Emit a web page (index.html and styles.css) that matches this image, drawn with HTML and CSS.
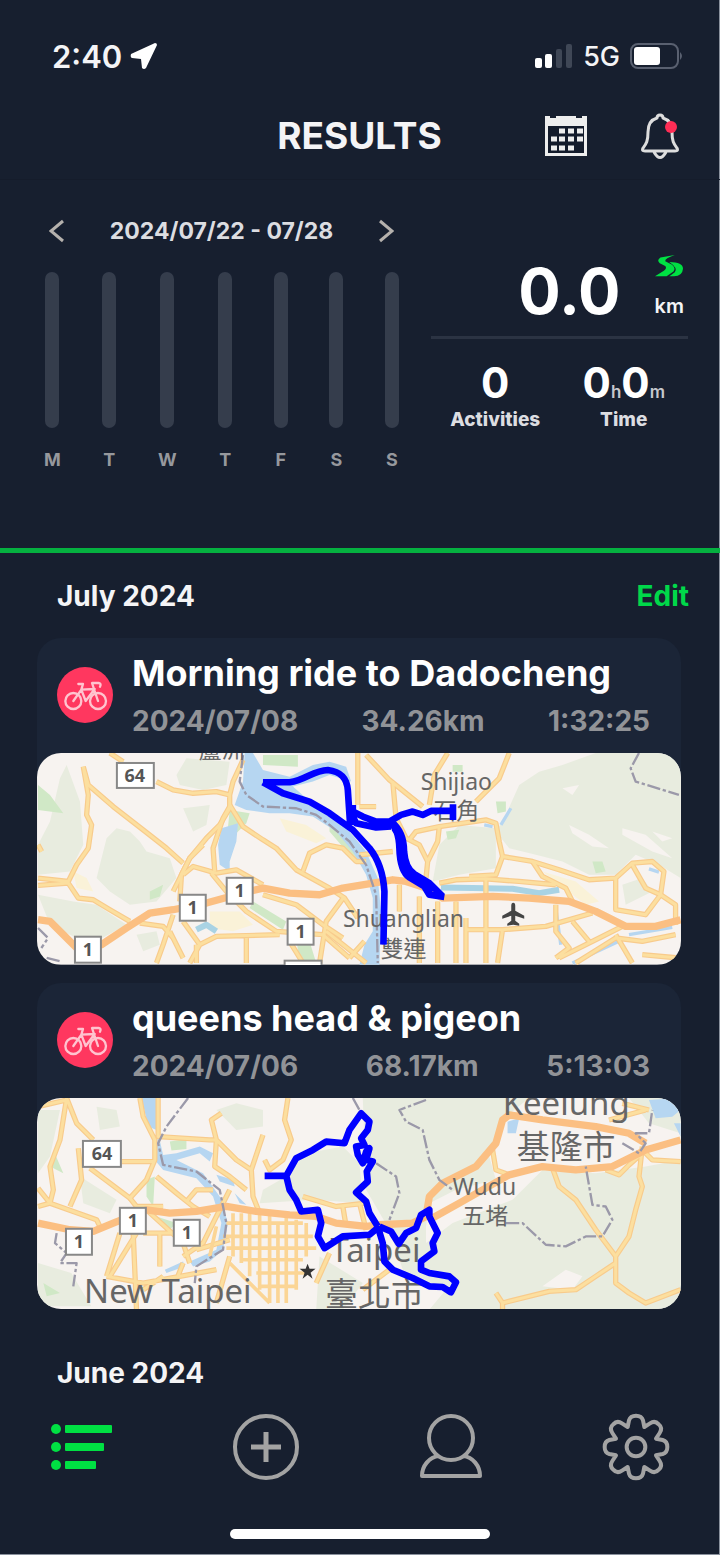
FILE: index.html
```
<!DOCTYPE html>
<html lang="en">
<head>
    <meta charset="UTF-8">
    <meta name="viewport" content="width=device-width, initial-scale=1.0">
    <title>Results</title>
    <link rel="stylesheet" href="styles.css">
</head>
<body>
    <div class="app">
        <div class="status-bar">
            <div class="status-left">
                <span class="clock">2:40</span>
                <svg width="28" height="28" viewBox="0 0 28 28" fill="#fff"><path d="M25 1L1 12q-1 3 1 4l9 1 1 9q2 2 4 0L27 3q0-2-2-2z"/></svg>
            </div>
            <div class="status-right">
                <svg width="38" height="26" viewBox="0 0 38 26">
                    <rect x="0" y="15" width="7" height="10" rx="2" fill="#fff"/>
                    <rect x="10" y="11" width="7" height="14" rx="2" fill="#fff"/>
                    <rect x="21" y="6" width="6" height="19" rx="2" fill="#3f4756"/>
                    <rect x="31" y="1" width="6" height="24" rx="2" fill="#3f4756"/>
                </svg>
                <span class="network">5G</span>
                <svg width="54" height="28" viewBox="0 0 54 28">
                    <rect x="1" y="2" width="47" height="24" rx="7" fill="none" stroke="#596070" stroke-width="2"/>
                    <rect x="4" y="5" width="26" height="18" rx="3" fill="#fff"/>
                    <path d="M50 10q4 4 0 8z" fill="#596070"/>
                </svg>
            </div>
        </div>

        <header class="header">
            <h1>RESULTS</h1>
            <div class="header-actions">
                <button class="icon-btn" aria-label="Calendar">
                    <svg width="44" height="44" viewBox="0 0 44 44">
                        <path d="M1 2h5v2h6V2h20v2h6V2h5v40H1z" fill="#eee"/>
                        <path d="M4 12h36v27H4z" fill="#131b2b"/>
                        <path d="M15 17h6M24 17h6M33 17h6M7 25h6M15 25h6M24 25h6M33 25h6M7 34h6M15 34h6M24 34h6" stroke="#eee" stroke-width="5"/>
                    </svg>
                </button>
                <button class="icon-btn" aria-label="Notifications">
                    <svg width="40" height="48" viewBox="0 0 40 48">
                        <path d="M20 3q3 0 3 3c7 2 9 8 9 14 0 10 2 12 5 16q2 3-2 3H5q-4 0-2-3c3-4 5-6 5-16 0-6 2-12 9-14q0-3 3-3zM14 40q6 11 12 0" fill="none" stroke="#ddd" stroke-width="3" stroke-linejoin="round"/>
                        <circle cx="31" cy="15" r="6" fill="#ff2d55"/>
                    </svg>
                </button>
            </div>
        </header>

        <section class="summary">
            <div class="week">
                <div class="week-nav">
                    <button class="icon-btn" aria-label="Previous week">
                        <svg width="16" height="24" viewBox="0 0 16 24"><path d="M14 2L2 12l12 10" fill="none" stroke="#b5b1ad" stroke-width="3"/></svg>
                    </button>
                    <span>2024/07/22 - 07/28</span>
                    <button class="icon-btn" aria-label="Next week">
                        <svg width="16" height="24" viewBox="0 0 16 24"><path d="M2 2l12 10L2 22" fill="none" stroke="#b5b1ad" stroke-width="3"/></svg>
                    </button>
                </div>
                <div class="bars">
                    <div class="day"><div class="bar"></div>M</div>
                    <div class="day"><div class="bar"></div>T</div>
                    <div class="day"><div class="bar"></div>W</div>
                    <div class="day"><div class="bar"></div>T</div>
                    <div class="day"><div class="bar"></div>F</div>
                    <div class="day"><div class="bar"></div>S</div>
                    <div class="day"><div class="bar"></div>S</div>
                </div>
            </div>
            <div class="totals">
                <div class="distance">
                    <span class="distance-value">0.0</span>
                    <div class="distance-unit">
                        <svg width="28" height="22" viewBox="0 0 82 64" fill="#00e043">
                            <path d="M58 0L16 7Q4 15 14 24l16 8q6 6-4 14L0 62h34l20-14q8-10-4-20L30 18q-2-8 28-18z"/>
                            <path d="M42 20q40 0 40 20-2 22-26 22H42l16-12q10-12-16-30z"/>
                        </svg>
                        <span>km</span>
                    </div>
                </div>
                <div class="counts">
                    <div class="count">
                        <div class="count-value">0</div>
                        <div class="count-label">Activities</div>
                    </div>
                    <div class="count">
                        <div class="count-value">0<small>h</small>0<small>m</small></div>
                        <div class="count-label">Time</div>
                    </div>
                </div>
            </div>
        </section>

        <main class="list">
            <div class="month">
                <h2>July 2024</h2>
                <button class="edit-btn">Edit</button>
            </div>

            <article class="card">
                <div class="card-header">
                    <svg class="sport" viewBox="0 0 168 168">
                        <circle cx="84" cy="84" r="84" fill="#ff375f"/>
                        <g id="bike" fill="none" stroke="#ffc4cf" stroke-width="7" stroke-linejoin="round" stroke-linecap="round">
                            <circle cx="49" cy="102" r="24"/>
                            <circle cx="123" cy="102" r="24"/>
                            <path d="M49 102l24-34 13 34 27-36M73 68l40-2M64 51h14l-5 17M123 102l-18-54h20q9 2 4 11"/>
                        </g>
                    </svg>
                    <div class="card-text">
                        <h3>Morning ride to Dadocheng</h3>
                        <div class="meta"><span>2024/07/08</span><span>34.26km</span><span>1:32:25</span></div>
                    </div>
                </div>
                <svg class="map" viewBox="0 0 645 212" role="img" aria-label="Route map, Dadocheng">
                    <defs>
                        <g id="roads-a">
                            <path d="M380 110L430 135 490 145 560 140 600 150V190L570 240 530 280 480 340 455 390 450 470M640 45L610 110 600 150M160 65L175 120 250 185 340 255 410 310 460 355M160 65L175 150 170 210 185 240 175 310 140 360 115 410 24 400M24 422L115 415 145 460 190 465 240 495 300 530"/>
                            <path d="M600 180L640 245 700 285 740 310 800 375 900 430 945 460 985 520M555 380L550 310 580 220 600 185M460 390L490 365 560 385 620 375 700 420M430 440L480 340 520 300M545 385L590 440 650 500 740 560 880 570 960 640M820 380L840 325 890 300 940 310 980 350H1010"/>
                            <path d="M430 510L400 600 380 655M420 560L460 640M460 530L510 600 480 655M510 600L560 575 750 570M650 580V655M500 600V655M780 590L820 655M890 560L1010 655M330 535L400 545 430 580M945 455L890 530 870 655M700 450L800 480 880 540 940 580M1005 590L960 640M240 24L280 50M985 24V180M24 300L35 320"/>
                            <g transform="translate(990 0)">
                                <path d="M20 30L90 105 190 185M265 24L225 90 210 180M450 24L420 100 350 170M100 110L110 220 140 280 180 300 205 350 200 400M205 350L235 290 240 245 170 260 150 285M240 245L380 225 410 235 420 290 430 335 410 390 330 395M430 335L520 350 600 375 690 405 770 400 820 355 880 350 915 380 905 450 860 510 770 495V400"/>
                                <path d="M520 350L550 395 620 430 640 470M820 360L860 430 905 450 950 480V540M240 415L290 405 380 402 480 410 590 420M380 400V655M290 470V655M235 470V655M320 520V655M180 455V655M120 420V500M320 555L430 555 560 545 700 505M430 555L415 655M590 480V560L630 610 590 640M600 640L700 590 790 545M640 530L690 590M650 655L770 580 850 590 950 570M770 570L820 655M850 630L960 640M0 185H50M0 330L100 320"/>
                            </g>
                        </g>
                        <path id="major-a" d="M24 525L60 530 100 570 140 610 215 600 290 550 360 505 430 495 530 475 640 445 700 430 780 445 870 450 940 430 1090 405 1130 410 1190 430 1240 460 1390 455 1500 460 1620 470 1700 500 1790 545 1880 545 1955 525"/>
                    </defs>
                    <rect class="land" width="645" height="212"/>
                    <g transform="translate(-7 -8) scale(.3333)">
                        <path class="wood" d="M24 300L60 230 90 100 110 60 150 170 160 300 120 380 24 390zM200 400L230 280 260 250 300 260 330 290 350 320 420 340 440 400 380 470 300 480 240 440zM440 90L470 40 600 50 590 120 520 135 450 120zM460 190L540 180 530 240 490 260zM24 450L130 470 200 480 290 540 180 600 60 540zM320 570l60-10 10 40-50 20z"/>
                        <path class="wood" d="M1400 260L1430 210 1470 120 1530 80 1600 60 1700 24H1955V400L1890 360 1820 330 1760 390 1680 390 1600 350 1520 330 1440 310zM1230 300L1290 240 1400 250V370L1290 390 1210 410zM1780 420l60-20 30 40-80 40z"/>
                        <path class="land" d="M1620 240l60 30 60 40-50-5-60-40zM1780 250l70 20 80 70-60-20-90-50zM1600 130l50-10-20 30zM1870 260l60 20-30 10z"/>
                        <path class="park" d="M24 120L60 150 100 205 24 195zM700 30h105v35l-105-5zM360 440l40-20-10 35-30 10zM670 470L770 530 760 555 660 490zM800 580L840 590 860 655H810zM1690 350h30l10 30-30 5zM1400 170h30v30l-25 5zM1250 260l40-5-10 25-25 5zM1270 60h30v20h-30zM600 195l60 10-10 30-60 60zM900 240l70 70 20 40-30-20-60-70z"/>
                        <path class="sand" d="M750 220l80 20 60 40-30 15-90-35zM540 500h90l40 40-60 20-70-10zM130 380l40 20 20 40-50-10zM1540 380l100 30 70 60-40 10z"/>
                        <path class="water" d="M645 24H670L700 75 780 95 850 60 900 50 950 65 965 110 900 90 850 110 790 125 830 160 900 200 960 260 1010 320 1045 400 1055 500 1050 660H990L1005 600 1030 560V460L1010 390 970 320 920 260 850 215 780 205 720 205 650 195 615 180 640 110zM575 250L625 235 620 290 600 350V380L570 360 565 300z"/>
                        <path class="stream" d="M1235 428L1330 430 1450 432 1530 445 1590 435M500 555L530 540 560 560"/>
                        <path class="creek" d="M1445 190L1415 240M1580 490L1595 600M1630 655L1770 590M1365 240L1390 245M1860 372L1890 382M1800 570L1930 548"/>
                        <use href="#roads-a" class="casing"/>
                        <use href="#roads-a" class="road"/>
                        <use href="#major-a" class="major"/>
                        <path class="border" d="M640 30L630 110 650 150 700 185 800 190 860 210 900 240 960 290 1010 360 1040 450 1045 655M1830 24L1805 70 1820 110 1870 125 1950 150M24 550l30 30-20 30M50 640l40 10"/>
                    </g>
                    <g class="shield">
                        <rect x="80" y="10" width="37" height="25"/><text x="98" y="29">64</text>
                        <rect x="143" y="142" width="26" height="26"/><text x="156" y="161">1</text>
                        <rect x="190" y="125" width="26" height="26"/><text x="203" y="144">1</text>
                        <rect x="251" y="166" width="26" height="26"/><text x="264" y="185">1</text>
                        <rect x="38" y="184" width="26" height="26"/><text x="51" y="203">1</text>
                        <rect x="248" y="208" width="37" height="25"/>
                    </g>
                    <path d="M477 150q2 0 2 3v5l9 5v3l-9-3v5l4 3v2l-6-1-6 1v-2l4-3v-5l-9 3v-3l9-5v-5q0-3 2-3z" fill="#444"/>
                    <g class="place">
                        <text x="185" y="5">蘆洲</text>
                        <text x="420" y="37">Shijiao</text>
                        <text x="420" y="66">石角</text>
                        <text x="367" y="174">Shuanglian</text>
                        <text x="367" y="204">雙連</text>
                    </g>
                    <g class="route" transform="translate(-7 -8) scale(.3333)">
                        <path d="M700 112H780C830 105 850 76 895 75 935 80 952 100 955 135L962 240M700 112L760 145 840 170 900 205 970 255 1020 310Q1060 360 1065 440L1062 600M970 180V200L1000 215 1040 230H1080L1115 210 1150 200 1180 210 1205 198 1265 198M1271 178V225M965 205L980 235 1040 248 1085 245"/>
                        <path d="M1080 232Q1108 250 1110 310 1112 380 1140 398L1185 425 1200 450 1245 457M1085 230Q1124 260 1124 320 1128 370 1155 388L1200 415 1240 455M1095 250Q1117 280 1117 330 1120 375 1150 395L1210 440"/>
                    </g>
                </svg>
            </article>

            <article class="card">
                <div class="card-header">
                    <svg class="sport" viewBox="0 0 168 168">
                        <circle cx="84" cy="84" r="84" fill="#ff375f"/>
                        <use href="#bike"/>
                    </svg>
                    <div class="card-text">
                        <h3>queens head &amp; pigeon</h3>
                        <div class="meta"><span>2024/07/06</span><span>68.17km</span><span>5:13:03</span></div>
                    </div>
                </div>
                <svg class="map" viewBox="0 0 645 212" role="img" aria-label="Route map, Taipei and Keelung">
                    <defs>
                        <g id="roads-b">
                            <path d="M110 24L90 150 60 230 70 300 60 340 24 350M110 24L140 100 190 150M24 50L110 30M24 295L60 340 130 365 200 390 210 410M145 175L155 270 120 350M180 235L300 325 350 270 375 210V150L340 80 330 24M385 24V140L540 150H560L545 90 575 70M560 150L555 230 600 260 650 300M560 150L620 210 665 240 700 135M665 240L670 320 690 370M775 24L765 90 785 150 760 210 720 240 705 210M275 215H375"/>
                            <path d="M380 260L440 310 490 350 540 380M300 325L320 350H400M470 335L500 300 550 300M350 360L460 460 480 520M270 430L230 560M320 430L240 560M310 430L320 660M390 430V530M340 430H440M230 560L340 580 560 540M500 480L600 450M600 300L570 360 520 460 460 500M820 320L920 350 1010 340M940 350L950 410M990 340L1010 420M900 490L860 580M1000 600L1080 540M560 640L600 500M460 520L440 570M340 600L400 560"/>
                            <path d="M1390 180L1400 240 1440 255M1840 170L1830 260 1840 290 1820 360 1800 440 1760 500V580L1800 610 1850 640 1955 600M1760 500L1700 420 1640 330 1590 290 1570 235M1760 520L1700 560 1640 600 1560 605 1420 640 1400 610M1420 640V660M1840 180L1870 210 1955 215M1740 90L1850 60M1730 240L1770 255 1800 225 1840 190M1780 40L1860 60"/>
                        </g>
                        <path id="streets-b" d="M610 370V500M635 370V520M660 370V560M690 370V600M720 370V640M745 400V640M770 380V640M800 390V600M830 400V500M590 400H820M580 440H850M590 475H860M640 510H820M680 550H840M690 590H800M560 410L540 500M600 520L720 640"/>
                        <path id="major-b" d="M24 400L120 420 190 425 250 400 350 360 420 370 500 365 590 350 680 365 780 375 860 380 920 400 1010 410 1050 405 1150 400 1190 380 1200 320 1240 280 1340 230 1400 160 1420 90 1440 75 1540 90 1700 110 1800 130 1850 160M1200 390L1290 340 1360 300 1440 255 1540 230 1640 240 1750 230 1850 180 1955 150"/>
                    </defs>
                    <rect class="land" width="645" height="212"/>
                    <g transform="translate(-7 -8) scale(.3333)">
                        <path class="wood" d="M24 60L90 60 60 200 24 250zM150 260L260 330 240 370 160 340zM200 50L260 60 270 110 210 120zM560 60L620 40 700 60V110L620 120zM700 300L770 260 830 190 940 170 990 220 1000 340 850 330 690 340zM24 520l100 30 60 100H24z"/>
                        <path class="wood" d="M1000 24H1955V660H1200L1250 600 1120 540 1080 420 1010 300zM870 500l130 80-60 80H860z"/>
                        <path class="land" d="M1190 410L1200 340 1280 300 1400 270 1380 200 1430 80 1500 24H1800L1860 100 1955 130V210L1850 230 1700 250 1540 240 1450 330 1270 400 1190 460zM1540 590l70-50 50 20-30 40z"/>
                        <path class="park" d="M420 155l50-8v30l-45 5zM350 270l25-10-5 90-20-30zM70 180l30 70-40-20zM380 380l60 20-20 20zM40 580l50 30-40 10z"/>
                        <path class="water" d="M335 24H385L380 120 355 110zM385 130L400 195 440 190 510 170 550 190 540 215 510 190 440 210 520 250 570 320 595 400 580 480 540 515 490 530 480 515 560 480 575 400 550 320 500 265 400 240 375 210zM560 255L610 270 615 290 570 275zM405 540L460 515 465 530 410 550zM615 310L650 345 630 340zM1860 30L1955 24V60L1930 80 1880 85zM1935 100h20v40zM1435 95L1470 85 1460 130H1435z"/>
                        <use href="#roads-b" class="casing"/>
                        <use href="#roads-b" class="road"/>
                        <use href="#streets-b" class="street"/>
                        <use href="#major-b" class="major"/>
                        <path class="border" d="M475 24L410 110 385 160 400 225 500 245 570 300 590 400 580 480 500 530 495 580M80 430L75 460 110 490 90 520 140 520 130 590M970 24L990 60M1190 30L1110 60 1130 95 1180 120 1200 210 1230 270 1270 300M1040 220L1100 260 1110 310 1080 390M1430 400H1480L1550 465 1610 470 1670 440 1720 440 1750 390 1730 350 1690 345 1670 230M1780 160L1830 190 1850 160 1820 130 1860 130 1870 60"/>
                    </g>
                    <g class="shield">
                        <rect x="46" y="43" width="38" height="26"/><text x="65" y="62">64</text>
                        <rect x="83" y="110" width="26" height="26"/><text x="96" y="129">1</text>
                        <rect x="137" y="122" width="26" height="26"/><text x="150" y="141">1</text>
                        <rect x="29" y="131" width="26" height="26"/><text x="42" y="150">1</text>
                    </g>
                    <path d="M271 166l2 5h6l-5 4 2 6-5-4-5 4 2-6-5-4h6z" fill="#333"/>
                    <g class="place city">
                        <text x="131" y="205">New Taipei</text>
                        <text x="339" y="164">Taipei</text>
                        <text x="338" y="208">臺北市</text>
                        <text x="530" y="17">Keelung</text>
                        <text x="530" y="61">基隆市</text>
                    </g>
                    <g class="place">
                        <text x="448" y="97">Wudu</text>
                        <text x="449" y="126">五堵</text>
                    </g>
                    <g class="route" transform="translate(-7 -8) scale(.3333)">
                        <path d="M705 258H770L800 205 850 180 890 155 945 160 960 120 995 70 1020 95 1015 120 995 145 1005 165 980 170 985 195 1000 220 1010 185 1020 175 1010 210 1030 215 1012 245 1015 275 980 308 1010 335 1020 370 1045 410M770 258L780 300 800 330 815 365 865 360 875 400 865 440 885 475 940 440 1020 435 1050 410"/>
                        <path d="M1050 410L1085 425 1108 462 1130 430 1160 415 1175 375 1200 360 1200 380 1225 430 1210 460 1215 485 1175 515 1175 540 1200 550 1260 560 1280 578 1265 608 1240 592 1200 590 1150 565 1090 540 1065 515 1060 460 1045 410"/>
                    </g>
                </svg>
            </article>

            <div class="month next-month">
                <h2>June 2024</h2>
            </div>
        </main>

        <nav class="tab-bar">
            <button class="icon-btn active" aria-label="Results">
                <svg width="68" height="68" viewBox="0 0 68 68" fill="currentColor">
                    <circle cx="9" cy="16" r="5"/><rect x="18" y="12" width="47" height="8" rx="1"/>
                    <circle cx="9" cy="34" r="5"/><rect x="18" y="30" width="39" height="8" rx="1"/>
                    <circle cx="9" cy="52" r="5"/><rect x="18" y="48" width="31" height="8" rx="1"/>
                </svg>
            </button>
            <button class="icon-btn" aria-label="Add activity">
                <svg width="68" height="68" viewBox="0 0 68 68" fill="none" stroke="currentColor" stroke-width="4">
                    <circle cx="34" cy="34" r="31"/>
                    <path d="M34 19v30M19 34h30" stroke-width="5"/>
                </svg>
            </button>
            <button class="icon-btn" aria-label="Profile">
                <svg width="68" height="68" viewBox="0 0 68 68" fill="none" stroke="currentColor" stroke-width="4" stroke-linejoin="round">
                    <circle cx="34" cy="25" r="22"/>
                    <path d="M22 43C12 44 5 53 5 63h58c0-10-7-19-17-20"/>
                </svg>
            </button>
            <button class="icon-btn" aria-label="Settings">
                <svg width="68" height="68" viewBox="-102 -102 204 204" fill="none" stroke="currentColor" stroke-width="12" stroke-linejoin="round">
                    <circle r="28"/>
                    <path d="M-25-60L-21-80Q-17-94 0-94 17-94 21-80L25-60 42-71Q57-81 68-68 81-57 71-42L60-25 80-21Q94-17 94 0 94 17 80 21L60 25 71 42Q81 57 68 68 57 81 42 71L25 60 21 80Q17 94 0 94-17 94-21 80L-25 60-42 71Q-57 81-68 68-81 57-71 42L-60 25-80 21Q-94 17-94 0-94-17-80-21L-60-25-71-42Q-81-57-68-68-57-81-42-71z"/>
                </svg>
            </button>
        </nav>
        <div class="home-indicator"></div>
    </div>
</body>
</html>
```
FILE: styles.css
```
* {
    margin: 0;
    padding: 0;
    box-sizing: border-box;
}

body {
    font-family: 'Inter', 'Noto Sans', sans-serif;
    background: #171f2f;
    color: #f4f4f6;
}

.app {
    min-height: 100vh;
    box-shadow: inset -1px -1px 0 #8a919d;
}

svg {
    display: block;
}

button {
    font: inherit;
    color: inherit;
    background: none;
    border: none;
    cursor: pointer;
}

.status-bar {
    display: flex;
    justify-content: space-between;
    align-items: center;
    height: 112px;
    padding: 0 36px 0 52px;
}

.status-left, .status-right {
    display: flex;
    align-items: center;
    gap: 8px;
}

.clock {
    font-size: 31px;
    font-weight: 600;
}

.network {
    font-size: 27px;
    font-weight: 500;
    margin: 0 2px;
}

.header {
    display: grid;
    grid-template-columns: 1fr auto 1fr;
    align-items: center;
    height: 68px;
    padding: 0 40px 20px 39px;
    border-bottom: 1px solid #151c2b;
}

.header h1 {
    grid-column: 2;
    font-size: 37px;
    line-height: 48px;
    font-weight: 700;
}

.header-actions {
    display: flex;
    justify-content: flex-end;
    align-items: center;
    gap: 52px;
}

.summary {
    display: flex;
    gap: 32px;
    padding: 31px 32px 78px 44px;
    border-bottom: 5px solid #05b040;
}

.week {
    flex: 355;
}

.week-nav {
    display: flex;
    justify-content: space-between;
    align-items: center;
    padding: 0 5px;
    margin-bottom: 21px;
    font-size: 23px;
    line-height: 40px;
    font-weight: 700;
    color: #dcdde1;
}

.bars {
    display: flex;
    justify-content: space-between;
}

.day {
    display: flex;
    flex-direction: column;
    align-items: center;
    gap: 22px;
    font-size: 18px;
    line-height: 20px;
    font-weight: 700;
    color: #96989d;
}

.bar {
    width: 14px;
    height: 156px;
    border-radius: 7px;
    background: #353d4c;
}

.totals {
    flex: 257;
    padding-top: 44px;
}

.distance {
    display: flex;
    justify-content: flex-end;
    gap: 34px;
    padding: 0 4px 9px 0;
    border-bottom: 3px solid #2b3343;
}

.distance-value {
    font-size: 63px;
    line-height: 72px;
    font-weight: 700;
    color: #fff;
}

.distance-unit {
    display: flex;
    flex-direction: column;
    align-items: center;
    gap: 17px;
    font-size: 20px;
    line-height: 24px;
    font-weight: 600;
}

.counts {
    display: grid;
    grid-template-columns: 1fr 1fr;
    padding-top: 24px;
    text-align: center;
}

.count-value {
    font-size: 42px;
    line-height: 40px;
    font-weight: 700;
    color: #fff;
}

.count-value small {
    font-size: 17px;
    line-height: 1;
    font-weight: 600;
    color: #c6c8cd;
}

.count-label {
    margin-top: 5px;
    font-size: 19px;
    line-height: 24px;
    font-weight: 800;
    color: #dcdde1;
}

.list {
    padding: 25px 39px 0 37px;
}

.month {
    display: flex;
    justify-content: space-between;
    align-items: center;
    margin: 0 -8px 24px 20px;
    font-size: 28px;
    line-height: 36px;
}

.month h2 {
    font-size: 28px;
    font-weight: 700;
}

.next-month {
    margin-top: 46px;
    margin-bottom: 0;
}

.edit-btn {
    font-weight: 700;
    color: #00d84a;
}

.card {
    background: #1b2537;
    border-radius: 24px;
}

.card + .card {
    margin-top: 18px;
}

.card-header {
    display: flex;
    align-items: center;
    gap: 19px;
    padding: 13px 31px 14px 20px;
}

.sport {
    flex: none;
    width: 56px;
    height: 56px;
}

.card-text {
    flex: 1;
}

.card h3 {
    font-size: 36px;
    line-height: 44px;
    font-weight: 700;
    color: #fff;
}

.meta {
    display: flex;
    justify-content: space-between;
    margin-top: 8px;
    font-size: 28px;
    line-height: 36px;
    font-weight: 700;
    color: #919397;
}

/* maps */
.map {
    width: 100%;
    height: auto;
    border-radius: 24px;
}

.land {
    fill: #f7f3f0;
}

.wood {
    fill: #e8ecdf;
}

.park {
    fill: #d0e8c6;
}

.sand {
    fill: #faf2d8;
}

.water {
    fill: #b6d6f1;
}

.stream, .creek, .casing, .road, .street, .major, .border, .route {
    fill: none;
    stroke-linejoin: round;
}

.stream {
    stroke: #a9d3e4;
    stroke-width: 18;
}

.creek {
    stroke: #b6d6f1;
    stroke-width: 10;
}

.casing {
    stroke: #f8cb8c;
    stroke-width: 16;
}

.road {
    stroke: #fcdf9f;
    stroke-width: 9;
}

.street {
    stroke: #fbd595;
    stroke-width: 11;
}

.major {
    stroke: #fbbf82;
    stroke-width: 22;
}

.border {
    stroke: #9b99a9;
    stroke-width: 7;
    stroke-dasharray: 40 8 10 8;
}

.route {
    stroke: #0000ff;
    stroke-width: 20;
}

.shield rect {
    fill: #fff;
    stroke: #888;
    stroke-width: 2;
}

.shield text {
    font: 700 18px 'Noto Sans', sans-serif;
    fill: #555;
    text-anchor: middle;
}

.place text {
    font: 23px 'Noto Sans', 'Noto Sans CJK TC', sans-serif;
    fill: #666;
    text-anchor: middle;
}

.city text {
    font-size: 33px;
}

.tab-bar {
    display: flex;
    justify-content: space-between;
    padding: 22px 50px 48px 47px;
    color: #a3a3a3;
}

.active {
    color: #00e043;
}

.home-indicator {
    width: 36%;
    height: 10px;
    margin: 0 auto;
    border-radius: 5px;
    background: #fff;
}
```
